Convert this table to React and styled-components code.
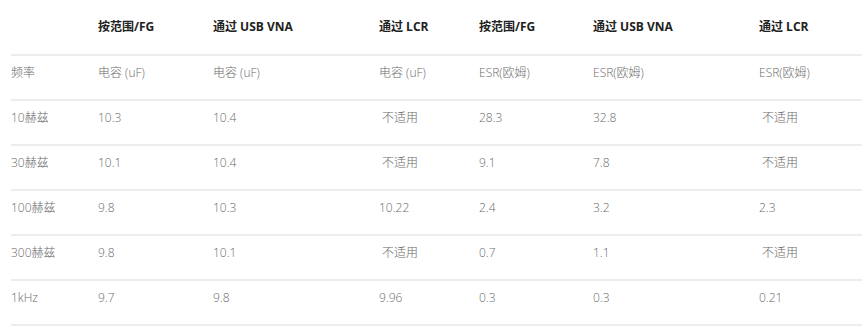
import React from "react";
import styled, { createGlobalStyle } from "styled-components";

const GlobalStyle = createGlobalStyle`
  html, body {
    margin: 0;
    padding: 0;
    background: #fff;
  }
  body {
    font-family: "Open Sans", "Noto Sans CJK SC", sans-serif;
  }
`;

const Wrap = styled.div`
  padding: 10px 0 0 11px;
`;

const Table = styled.table`
  width: 851px;
  border-collapse: collapse;
  table-layout: fixed;
`;

const Row = styled.tr`
  height: 45px;
  border-bottom: 2px solid #ededed;
`;

const HeadCell = styled.th`
  padding: 7px 0 0;
  vertical-align: top;
  text-align: left;
  font-size: 12px;
  font-weight: 700;
  color: #222;
  line-height: 20px;
  white-space: nowrap;
`;

const Cell = styled.td`
  padding: 8px 0 0;
  vertical-align: top;
  text-align: left;
  font-size: 12px;
  font-weight: 300;
  color: #6a6a6a;
  line-height: 18px;
  white-space: nowrap;
`;

const widths = [87, 115, 166, 100, 114, 166, 103];

const heads = ["", "按范围/FG", "通过 USB VNA", "通过 LCR", "按范围/FG", "通过 USB VNA", "通过 LCR"];

const na = "\u00a0不适用";

const rows = [
  ["频率", "电容 (uF)", "电容 (uF)", "电容 (uF)", "ESR(欧姆)", "ESR(欧姆)", "ESR(欧姆)"],
  ["10赫兹", "10.3", "10.4", na, "28.3", "32.8", na],
  ["30赫兹", "10.1", "10.4", na, "9.1", "7.8", na],
  ["100赫兹", "9.8", "10.3", "10.22", "2.4", "3.2", "2.3"],
  ["300赫兹", "9.8", "10.1", na, "0.7", "1.1", na],
  ["1kHz", "9.7", "9.8", "9.96", "0.3", "0.3", "0.21"],
];

const App = () => {
  return (
    <Wrap>
      <GlobalStyle />
      <Table>
        <colgroup>
          {widths.map((w, i) => (
            <col key={i} style={{ width: w }} />
          ))}
        </colgroup>
        <thead>
          <Row>
            {heads.map((h, i) => (
              <HeadCell key={i}>{h}</HeadCell>
            ))}
          </Row>
        </thead>
        <tbody>
          {rows.map((r, ri) => (
            <Row key={ri}>
              {r.map((c, ci) => (
                <Cell key={ci}>{c}</Cell>
              ))}
            </Row>
          ))}
        </tbody>
      </Table>
    </Wrap>
  );
};

export default App;
